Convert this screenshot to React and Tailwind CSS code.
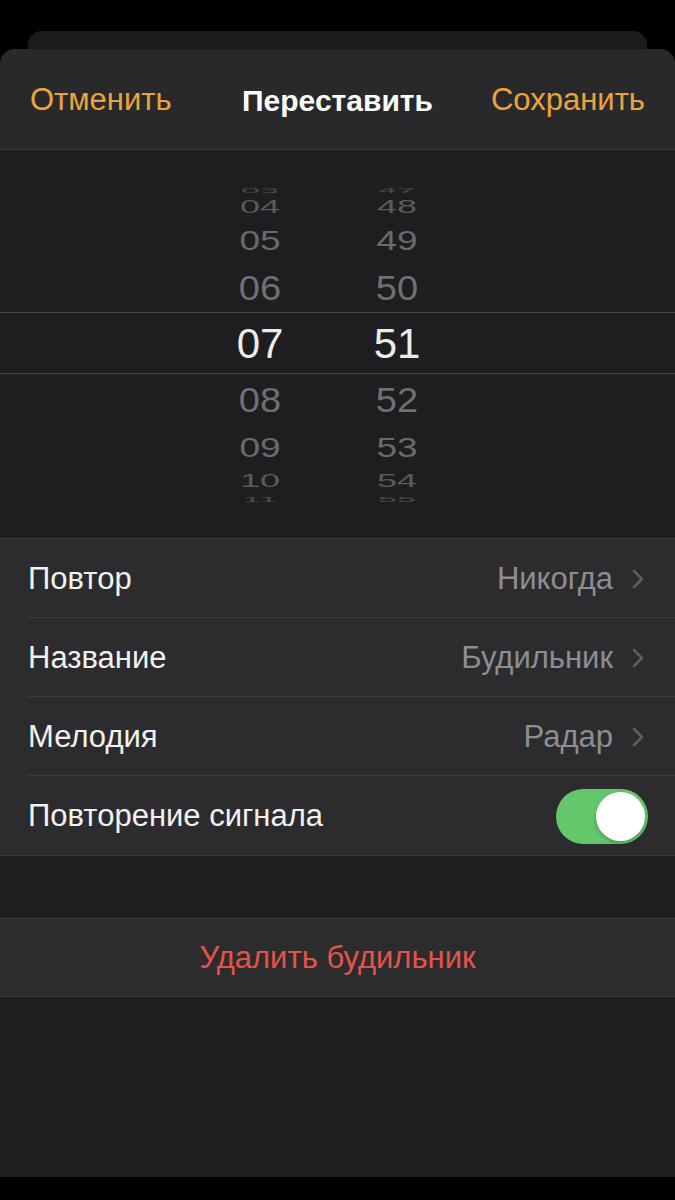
import React from "react";

const font = { fontFamily: '"Liberation Sans", Arial, sans-serif' };

const hours = [
  { t: "03", h: "h-[13px]", cls: "text-[34px] scale-y-[0.22] text-[#4a4a4c]" },
  { t: "04", h: "h-[22px]", cls: "text-[36px] scale-y-[0.5] text-[#5a5a5d]" },
  { t: "05", h: "h-[45px]", cls: "text-[37px] scale-y-[0.76] text-[#6a6a6d]" },
  { t: "06", h: "h-[50px]", cls: "text-[38px] scale-y-[0.9] text-[#707073]" },
  { t: "07", h: "h-[62px]", cls: "text-[42px] text-[#ececec]" },
  { t: "08", h: "h-[50px]", cls: "text-[38px] scale-y-[0.9] text-[#707073]" },
  { t: "09", h: "h-[45px]", cls: "text-[37px] scale-y-[0.76] text-[#6a6a6d]" },
  { t: "10", h: "h-[22px]", cls: "text-[36px] scale-y-[0.5] text-[#5a5a5d]" },
  { t: "11", h: "h-[13px]", cls: "text-[34px] scale-y-[0.22] text-[#4a4a4c]" },
];
const mins = ["47", "48", "49", "50", "51", "52", "53", "54", "55"];

function Chevron() {
  return (
    <svg width="14" height="22" viewBox="0 0 14 22" className="ml-[18px]">
      <polyline points="3,3 11,11 3,19" fill="none" stroke="#5e5e62" strokeWidth="2.6" strokeLinecap="round" strokeLinejoin="round" />
    </svg>
  );
}

function Row({ label, value, last, children }) {
  return (
    <div className="flex h-[79px] items-stretch bg-[#2c2c2e] pl-[28px]">
      <div className={"flex flex-1 items-center pt-[2px] " + (children ? "pr-[27px] " : "pr-[30px] ") + (last ? "" : "border-b border-[#3d3d40]")}>
        <span className="text-[31px] text-[#f2f2f2]">{label}</span>
        <div className="ml-auto flex items-center">
          {value && <span className="text-[31px] text-[#8d8d92]">{value}</span>}
          {value && <Chevron />}
          {children}
        </div>
      </div>
    </div>
  );
}

function Wheel({ items, x }) {
  return (
    <div className={"flex flex-col items-center " + x}>
      {hours.map((r, i) => (
        <div key={i} className={"flex items-center justify-center overflow-hidden " + r.h}>
          <span className={"inline-block leading-none " + r.cls}>{items[i]}</span>
        </div>
      ))}
    </div>
  );
}

export default function App() {
  return (
    <div className="min-h-[1200px] w-[675px] bg-black" style={font}>
      <div className="h-[31px]" />
      <div className="mx-[28px] h-[18px] rounded-t-[14px] bg-[#1c1c1e]" />
      <div className="overflow-hidden rounded-t-[15px] bg-[#1e1e20]">
        {/* header */}
        <div className="grid h-[101px] grid-cols-[1fr_auto_1fr] items-center border-b border-[#3a3a3c] bg-[#29292b] px-[30px] pt-[2px]">
          <span className="justify-self-start text-[31px] text-[#e9a43b]">Отменить</span>
          <span className="text-[30px] font-bold text-white">Переставить</span>
          <span className="justify-self-end text-[31px] text-[#e9a43b]">Сохранить</span>
        </div>
        {/* picker */}
        <div className="relative h-[388px] bg-[#1e1e20] pt-[33px]">
          <div className="absolute left-0 right-0 top-[162px] h-[62px] border-y border-[#48484b]" />
          <div className="relative flex">
            <Wheel items={hours.map((h) => h.t)} x="ml-[218px] w-[84px]" />
            <Wheel items={mins} x="ml-[53px] w-[84px]" />
          </div>
        </div>
        {/* list */}
        <div className="border-t border-[#3a3a3c]">
          <Row label="Повтор" value="Никогда" />
          <Row label="Название" value="Будильник" />
          <Row label="Мелодия" value="Радар" />
          <Row label="Повторение сигнала" last>
            <div className="flex h-[55px] w-[92px] items-center justify-end rounded-full bg-[#64c86a] pr-[3px]">
              <div className="h-[49px] w-[49px] rounded-full bg-white shadow-[0_2px_4px_rgba(0,0,0,0.25)]" />
            </div>
          </Row>
        </div>
        <div className="h-[63px] border-t border-[#3a3a3c] bg-[#1e1e20]" />
        <div className="flex h-[79px] items-center justify-center border-y border-[#3a3a3c] bg-[#2c2c2e] pt-[2px]">
          <span className="text-[31px] text-[#e2544a]">Удалить будильник</span>
        </div>
        <div className="h-[180px] bg-[#1e1e20]" />
      </div>
    </div>
  );
}
